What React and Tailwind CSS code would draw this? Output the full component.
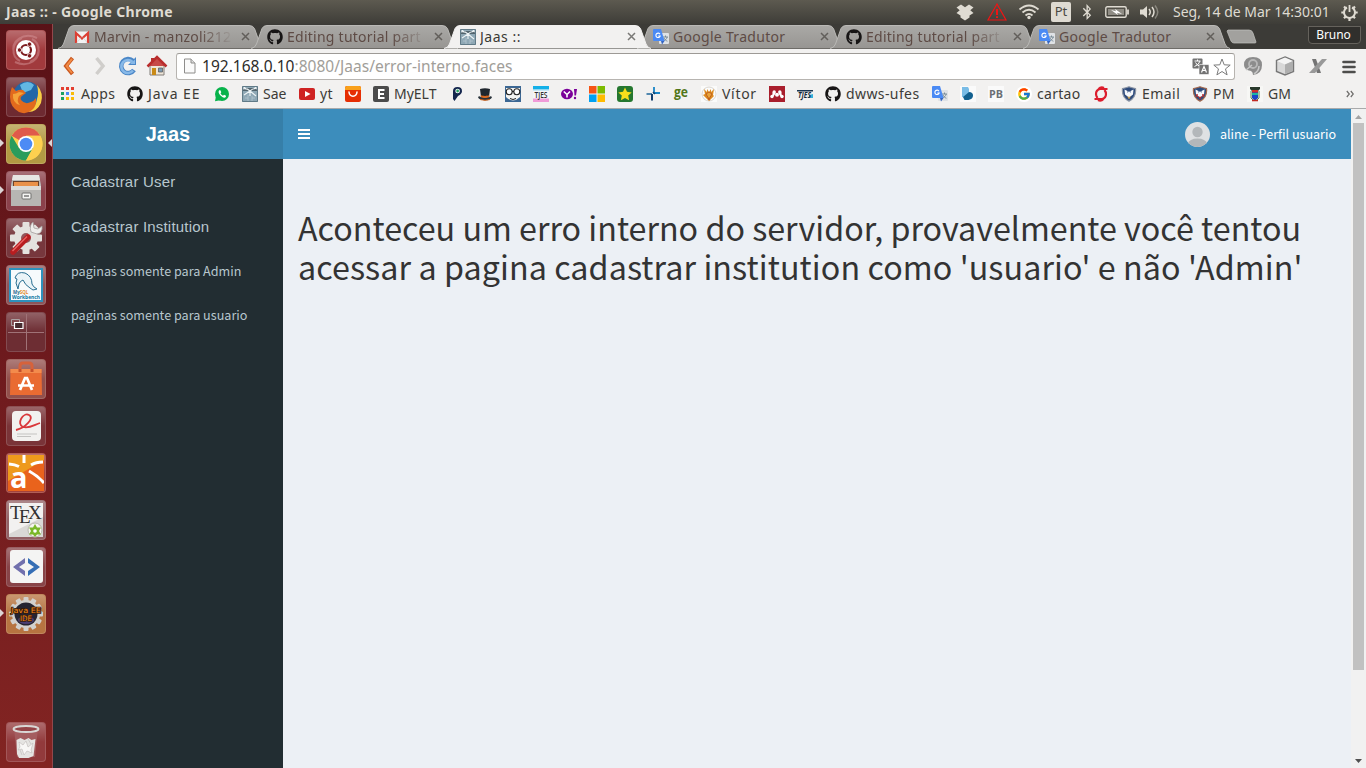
import React from "react";
import { FaGithub, FaBluetoothB } from "react-icons/fa";
import { FcGoogle } from "react-icons/fc";

const ui = "font-['Noto_Sans',sans-serif]";
const source = "font-['Noto_Sans_CJK_JP',sans-serif]";

const Svg = ({ size = 16, box = 16, className = "", children }) => (
  <svg width={size} height={size} viewBox={`0 0 ${box} ${box}`} className={`block shrink-0 ${className}`}>
    {children}
  </svg>
);

/* ---------- small site icons ---------- */
const Github = () => <FaGithub size={16} className="block shrink-0 text-[#171515]" />;

const Gmail = () => (
  <Svg>
    <rect x="1" y="2.500" width="14" height="11.500" fill="#f3f3f3" />
    <path d="M2 14V4l6 5.500L14 4v10" fill="none" stroke="#dc4034" strokeWidth="2.200" />
    <path d="M3 13.500l4-5m6 5l-4-5" stroke="#cfcfcf" strokeWidth=".7" />
  </Svg>
);

const Sae = () => (
  <Svg>
    <rect width="16" height="16" rx="1" fill="#8fa8b5" />
    <rect y="2" width="16" height="3" fill="#52646d" />
    <path d="M0 3c4-1 6 0 8 2 2-2 5-3 8-2M8 5L2 9M8 5l6 5M8 5v5M1 0l3 3m11-3l-3 3" stroke="#eef4f6" strokeWidth="1.100" fill="none" />
    <path d="M6 9v6M10 10v5M3 12h3M10 12h3" stroke="#b9cad2" strokeWidth=".7" fill="none" />
    <path d="M.5.500h15v15H.5z" fill="none" stroke="#617b88" />
  </Svg>
);

const Translate = () => (
  <Svg>
    <rect x="6" y="4" width="10" height="11" rx="1" fill="#dfe2e5" />
    <path d="M10 8h5m-2.500-1.500V8m1.700 0c-.4 2-2 3.300-3.600 4M11 9c.6 1.500 2 2.700 3.400 3.200" stroke="#71838f" strokeWidth=".9" fill="none" />
    <path d="M1 0h7l3.500 12H1a1 1 0 01-1-1V1a1 1 0 011-1z" fill="#4a8af4" />
    <path d="M8 12h3.500L9 15.500z" fill="#3564bf" />
    <path d="M7 5.200A2.200 2.200 0 107.200 7H5.300" stroke="#fff" strokeWidth="1.100" fill="none" />
  </Svg>
);

const Apps = () => (
  <Svg>
    {["#e33e2f", "#e33e2f", "#e33e2f", "#1ba160", "#4a89f3", "#fabb05", "#1ba160", "#fabb05", "#fabb05"].map((c, i) => (
      <rect key={i} x={1 + (i % 3) * 5} y={1 + Math.floor(i / 3) * 5} width="3" height="3" fill={c} />
    ))}
  </Svg>
);

const Whatsapp = () => (
  <Svg>
    <circle cx="8" cy="8" r="7" fill="#08b34b" />
    <path d="M1 15.200l1-5 4 4z" fill="#08b34b" />
    <path d="M5.200 4.200c-1.500 1.700.2 4.300 2 5.900 1.700 1.600 3.500 2.100 4.600.8l.2-1.200-2-1-1 1c-1-.4-2-1.400-2.500-2.500l.8-.9-.9-2z" fill="#fff" />
  </Svg>
);

const Youtube = () => (
  <Svg>
    <rect y="2" width="16" height="12" rx="2" fill="#cf2323" />
    <path d="M6 5l5.500 3L6 11z" fill="#fff" />
  </Svg>
);

const Ali = () => (
  <Svg>
    <rect width="16" height="16" rx="2" fill="#e62e04" />
    <path d="M0 2a2 2 0 012-2h12a2 2 0 012 2v2H0z" fill="#f9a01b" />
    <path d="M4 6c.5 5.500 7.500 5.500 8 0" stroke="#fff" strokeWidth="1.500" fill="none" strokeLinecap="round" />
  </Svg>
);

const Letter = () => (
  <Svg>
    <rect width="16" height="16" rx="2" fill="#4b4b4b" />
    <path d="M11.500 4H6v8h5.500M6 8h5" stroke="#fff" strokeWidth="2" fill="none" />
  </Svg>
);

const Pin = () => (
  <Svg>
    <path d="M4 5Q4 1 8.500 1T13 5.200Q13 8 9 10l-3.500 5L4 13z" fill="#14264d" />
    <circle cx="8.600" cy="5" r="2.300" fill="#fff" />
    <circle cx="8.600" cy="5" r="1.400" fill="#25a163" />
  </Svg>
);

const Hat = () => (
  <Svg>
    <path d="M3 3c3-1 7-1 10 0l-1 8H4z" fill="#20272e" />
    <path d="M3.800 9c2 1.200 6.400 1.200 8.500 0l-.3 3H4z" fill="#d9681f" />
    <path d="M1 11c1-1 2-1 3 .3 2 1 6 1 8 0 1-1.300 2-1.300 3-.3-1 4.500-13 4.500-14 0z" fill="#28323a" />
    <path d="M3 13.500q5 1.600 10 0" stroke="#d9681f" fill="none" />
  </Svg>
);

const Glasses = () => (
  <Svg>
    <rect width="16" height="16" fill="#3c6793" />
    <path d="M1 2h14v9q-7 7-14 0z" fill="#f4f4f2" />
    <path d="M5 12.500q3 2 6 0" fill="none" stroke="#222" />
    <circle cx="4.200" cy="5.800" r="3" fill="#fff" stroke="#222" strokeWidth="1.100" />
    <circle cx="11.800" cy="5.800" r="3" fill="#fff" stroke="#222" strokeWidth="1.100" />
    <path d="M7 5.500h2" stroke="#222" />
  </Svg>
);

const iconText = "font-['Open_Sans',sans-serif] font-bold";

const Tjes = () => (
  <Svg>
    <rect width="16" height="16" fill="#f4f6f8" />
    <rect width="16" height="3.500" fill="#14b0e8" />
    <rect y="3.500" width="16" height="1" fill="#9bdcf3" />
    <rect y="12.500" width="16" height="3.500" fill="#f09bd8" />
    <text x="1.500" y="11.500" fontSize="9" textLength="13" lengthAdjust="spacingAndGlyphs" fill="#333" className="font-['Open_Sans',sans-serif] font-semibold">TJES</text>
  </Svg>
);

const Yahoo = () => (
  <Svg>
    <ellipse cx="6" cy="8" rx="6" ry="5.300" fill="#7b0099" />
    <path d="M2.800 5.500L6 8.500v3M9 5.500L6 8.500" stroke="#fff" strokeWidth="1.600" fill="none" />
    <path d="M13 3h3l-1 6.500h-1.500z" fill="#7b0099" />
    <circle cx="14" cy="12" r="1.200" fill="#7b0099" />
  </Svg>
);

const Windows = () => (
  <Svg>
    <path d="M0 0h7.500v7.500H0z" fill="#f65314" />
    <path d="M8.500 0H16v7.500H8.500z" fill="#7cbb00" />
    <path d="M0 8.500h7.500V16H0z" fill="#00a1f1" />
    <path d="M8.500 8.500H16V16H8.500z" fill="#ffbb00" />
  </Svg>
);

const Star = () => (
  <Svg>
    <rect width="16" height="16" rx="3" fill="#25772f" />
    <path d="M8 1.500l2 4.300 4.700.6-3.500 3.200.9 4.600L8 12l-4.100 2.200.9-4.600L1.300 6.400 6 5.800z" fill="#f6df1b" />
  </Svg>
);

const Spark = () => (
  <Svg>
    <path d="M1.500 8H7" stroke="#2a6f9f" strokeWidth="1.600" fill="none" />
    <path d="M7 8v6.500" stroke="#123e6d" strokeWidth="2" fill="none" />
    <path d="M9 1v6h6" stroke="#1a86c7" strokeWidth="1.800" fill="none" />
    <path d="M8 6l2 2" stroke="#123e6d" strokeWidth="1.500" />
  </Svg>
);

const Ge = () => (
  <Svg>
    <text x="1" y="11" fontSize="13.500" textLength="14" lengthAdjust="spacingAndGlyphs" fill="#517619" className={iconText}>ge</text>
  </Svg>
);

const Crest = () => (
  <Svg>
    <rect width="16" height="16" fill="#fbfbfa" />
    <circle cx="8" cy="8" r="7" fill="none" stroke="#d9d5d0" />
    <path d="M3 3l3 3V3l2 3 2-3v3l3-3-1 6 1 1-5 5-4-4-2-2 2-1z" fill="#dc8a1f" />
    <path d="M5 8l3-2 3 2-3 5zM7 13l2 1" stroke="#b24719" strokeWidth=".7" fill="#e8a43a" />
  </Svg>
);

const Mendeley = () => (
  <Svg>
    <rect width="16" height="16" fill="#a91e2c" />
    <g fill="#fff">
      <circle cx="3" cy="10.500" r="1.700" />
      <circle cx="13" cy="10.500" r="1.700" />
      <circle cx="8" cy="8.800" r="2" />
      <circle cx="5.200" cy="6" r="1.700" />
      <circle cx="10.800" cy="6" r="1.700" />
      <path d="M3.700 6h2.500v2L4.500 10.500H3zM9.800 6h2.500l.7 4.500h-1.500L9.800 8z" />
    </g>
  </Svg>
);

const TjesWide = () => (
  <Svg>
    <path d="M0 4h16v1.500H0z" fill="#1a3550" />
    <path d="M12 9l4-1v4h-4z" fill="#34afd8" />
    <text x="1" y="12" fontSize="9" textLength="13" lengthAdjust="spacingAndGlyphs" fill="#182a38" className={`${iconText} italic`}>TJES</text>
  </Svg>
);

const Bluefold = () => (
  <Svg>
    <rect width="16" height="16" fill="#fafafa" />
    <path d="M2 1h6l1 2v9l-7-1z" fill="#79bce6" />
    <path d="M3 11l6-5q4 0 4 3.500T8.500 14H4.500z" fill="#12608f" />
  </Svg>
);

const Pb = () => (
  <Svg>
    <rect width="16" height="16" fill="#fafafa" />
    <text x="1" y="12" fontSize="11" textLength="14" lengthAdjust="spacingAndGlyphs" fill="#6b6f75" className={iconText}>PB</text>
  </Svg>
);

const Google = () => (
  <span className="flex size-4 shrink-0 items-center justify-center rounded-full bg-white">
    <FcGoogle size={14} />
  </span>
);

const Swirl = () => (
  <Svg>
    <g stroke="#dc1d2d" strokeWidth="2.200" fill="none">
      <path d="M14.500 3H7Q3 4 3 8q0 2 1.500 4" />
      <path d="M1.500 13H9q4-1 4-5 0-2-1.500-4" />
      <path d="M5.500 3Q8 .5 11 2M10.500 13Q8 15.500 5 14" />
    </g>
  </Svg>
);

const Shield = ({ red }) => (
  <Svg>
    <path d="M1.500 2.500Q5 2 8 .8 11 2 14.500 2.500q1 9-6.500 12.700Q.5 11.500 1.500 2.500z" fill="#2e4b7c" stroke={red ? "#a5684c" : "#8d96a5"} strokeWidth="1.200" />
    <path d="M3.500 3.500l.5 5 4 3 4-3 .5-5-3 1.500v2L8 5 6.500 7V5z" fill="#f5f7fb" />
    <path d="M6 10l2 3.500 2-3.500-2 1z" fill={red ? "#bd2d2c" : "#c7a158"} />
    {red && <path d="M5 8v3M11 8v3" stroke="#bd2d2c" strokeWidth="1.500" />}
  </Svg>
);

const Coat = () => (
  <Svg>
    <rect width="16" height="16" fill="#f7f7f5" />
    <path d="M3 1h10v2l-2 2H5L3 3z" fill="#28382b" />
    <path d="M5 4h6v8l-3 3-3-3z" fill="#1947c7" />
    <path d="M5 4h6v2.500H5z" fill="#d12f26" />
    <path d="M5 7h6v2H5z" fill="#19b6a5" />
    <path d="M4 5v7l2 2m6-9v7l-2 2" stroke="#5d8a52" fill="none" />
    <path d="M5 14.500h6" stroke="#c32a22" strokeWidth="1.600" />
  </Svg>
);

/* ---------- top panel ---------- */
const Dropbox = () => (
  <svg width="18" height="17" viewBox="0 0 18 17" className="block">
    <path d="M5 .500L.5 3.500l3.200 2.700L.5 9l4 2.500v2L9 16.500l4.500-3v-2l4-2.500-3.200-2.800 3.200-2.700L13 .500 9 3.200z" fill="#dfdbd2" />
  </svg>
);
const Warning = () => (
  <svg width="20" height="18" viewBox="0 0 20 18" className="block">
    <path d="M10 1L1 17h18z" fill="none" stroke="#f01414" strokeWidth="1.200" />
    <path d="M10 6v6m0 1.200V15" stroke="#f01414" strokeWidth="2" />
  </svg>
);
const Wifi = () => (
  <svg width="22" height="16" viewBox="0 0 22 16" className="block">
    <g fill="none" stroke="#dfdbd2" strokeWidth="1.900">
      <path d="M1.500 5.500Q11-2.500 20.500 5.500M4.500 8.500Q11 3 17.500 8.500M7.500 11.500Q11 8.500 14.500 11.500" />
    </g>
    <circle cx="11" cy="13.500" r="1.700" fill="#dfdbd2" />
  </svg>
);
const Battery = () => (
  <svg width="24" height="12" viewBox="0 0 24 12" className="block">
    <rect x=".8" y=".8" width="20.400" height="10.400" rx="1.500" fill="none" stroke="#dfdbd2" strokeWidth="1.400" />
    <rect x="3" y="3" width="16" height="6" fill="#8f8c84" />
    <path d="M23 3.500v5" stroke="#dfdbd2" strokeWidth="1.800" />
    <path d="M6 4l5 1.200L10 3l7 5-5-1.200L13 9z" fill="#fff" />
  </svg>
);
const Volume = () => (
  <svg width="20" height="14" viewBox="0 0 20 14" className="block">
    <path d="M0 4.500h3L7 1v12L3 9.500H0z" fill="#dfdbd2" />
    <g fill="none" stroke="#dfdbd2" strokeWidth="1.500">
      <path d="M9 4q2.500 3 0 6M12 2q4 5 0 10" />
      <path d="M15 .5q5.500 6.500 0 13" opacity=".4" />
    </g>
  </svg>
);
const Power = () => (
  <svg width="17" height="17" viewBox="0 0 17 17" className="block">
    <g fill="none" stroke="#dfdbd2">
      <path d="M6 3.500a5.500 5.500 0 105 0" strokeWidth="2" />
      <path d="M8.500 1v7" strokeWidth="1.800" />
      <path d="M3 2.500l2 2M14 2.500l-2 2M.3 8.500h2.500M14.200 8.500h2.500M3 14.200l1.600-1.800M14 14.200l-1.600-1.800M8.500 14v3" strokeWidth="2.200" />
    </g>
  </svg>
);

function TopPanel() {
  return (
    <header className={`flex h-6 shrink-0 items-center bg-linear-to-b from-[#5d5a50] to-[#3e3d38] pl-[6px] pr-[8px] text-[#dfdbd2] ${ui}`}>
      <div className="flex-1 text-[14px] leading-6 font-bold tracking-[0.340px]">Jaas :: - Google Chrome</div>
      <div className="flex items-center">
        <div className="mr-[13px]"><Dropbox /></div>
        <div className="mr-[11px]"><Warning /></div>
        <div className="mr-[11px]"><Wifi /></div>
        <div className="mr-[8px] flex h-5 w-5 items-center justify-center rounded-[2px] bg-[#dfdbd2] text-[13px] text-[#4b4943]">Pt</div>
        <FaBluetoothB size={16} className="mr-[10px]" />
        <div className="mr-[11px]"><Battery /></div>
        <div className="mr-[13px]"><Volume /></div>
        <div className="mr-3 w-[156px] text-[14px] leading-6 tracking-[-0.010px] whitespace-nowrap">Seg, 14 de Mar 14:30:01</div>
        <Power />
      </div>
    </header>
  );
}

/* ---------- launcher ---------- */
const Big = (p) => <Svg size={p.size || 36} box={36}>{p.children}</Svg>;

const gearTeeth = (n, r, w, h) =>
  Array.from({ length: n }, (_, i) => (
    <rect key={i} x={18 - w / 2} y={18 - r} width={w} height={h} rx="1" transform={`rotate(${(i * 360) / n} 18 18)`} />
  ));

const launchers = [
  {
    bg: "bg-[#a13a3d]",
    icon: (
      <Big>
        <g fill="none" stroke="#d69497" strokeWidth="2" opacity=".5">
          <path d="M6 22C2 8 16 0 29 6M30 14c4 14-10 22-23 16M12 29C2 24 4 10 14 6M24 7c10 5 8 19-2 23" />
        </g>
        <circle cx="18" cy="18" r="10" fill="#fff" />
        <circle cx="18" cy="18" r="5" fill="none" stroke="#7c1b1e" strokeWidth="2.200" />
        <g fill="#7c1b1e" stroke="#fff" strokeWidth=".8">
          <circle cx="11.500" cy="18" r="2.200" /><circle cx="21.500" cy="12.200" r="2.200" /><circle cx="21.500" cy="23.800" r="2.200" />
        </g>
      </Big>
    ),
  },
  {
    bg: "bg-[#6e2a31]",
    icon: (
      <Big>
        <circle cx="19" cy="16" r="13.500" fill="#2267a8" />
        <path d="M12 6q8-6 14 0l-3 5-8 3z" fill="#62b7e2" />
        <path d="M29 6q7 8 4 18-4 9-13 9 8-5 9-13 2-6 0-14z" fill="#f8cf45" />
        <path d="M4 8l4 4q4-2 7-1l3 3-4 3q-2 1-1 4 4 5 10 2 3-1 5-4 1 8-4 12-6 5-13 2Q2 28 2 18q0-6 2-10z" fill="#e26a1d" />
        <path d="M5 15q3 0 6-2l5 1-5 3q-3 5 1 9-8-2-7-11z" fill="#f5a33a" />
      </Big>
    ),
  },
  {
    bg: "bg-[#b39a43]",
    left: true,
    right: true,
    icon: (
      <Big>
        <circle cx="18" cy="18" r="16.500" fill="#fdd04f" />
        <path d="M18 18L3.700 9.800A16.500 16.500 0 0132.300 9.800H18z" fill="#df5a4b" />
        <path d="M3.700 9.800A16.500 16.500 0 0018 34.500l7-12.400L11 22z" fill="#2a9c5c" />
        <path d="M18 9.800h14.300A16.500 16.500 0 0118 34.500l7-12.500z" fill="#fdd04f" />
        <circle cx="18" cy="18" r="8" fill="#fff" />
        <circle cx="18" cy="18" r="6.300" fill="#4c8bf5" />
      </Big>
    ),
  },
  {
    bg: "bg-[#8b414b]",
    left: true,
    icon: (
      <Big>
        <path d="M5 2h26l2 10v21H3V12z" fill="#b9b8b5" />
        <path d="M5 2h26l1 5H4z" fill="#e7e6e3" />
        <path d="M5 8h26v5H5z" fill="#6b4128" />
        <path d="M6 9h24v4H6z" fill="#e99149" />
        <path d="M3 13h30v20H3z" fill="#b7b6b3" />
        <path d="M3 13h30v4H3z" fill="#dcdbd8" />
        <rect x="14" y="20" width="9" height="6" rx="1" fill="#f5f5f3" stroke="#70706e" />
        <path d="M16 23h5" stroke="#777" strokeWidth="1.500" />
      </Big>
    ),
  },
  {
    bg: "bg-[#77373d]",
    icon: (
      <Big>
        <g fill="#e4e2df">{gearTeeth(8, 16, 7, 9)}<circle cx="18" cy="18" r="12" /></g>
        <circle cx="18" cy="18" r="5" fill="#93565b" />
        <path d="M15 22L27 10" stroke="#dededc" strokeWidth="4" />
        <path d="M25 2l1 6 4 1 4-3q1 7-5 8l-6-2q-2-7 2-10z" fill="#efeeec" stroke="#a4a09e" strokeWidth=".8" />
        <path d="M5 32L20 17" stroke="#b71d20" strokeWidth="5.500" strokeLinecap="round" />
        <path d="M4.500 31L19 16.500" stroke="#ea6462" strokeWidth="1.500" />
      </Big>
    ),
  },
  {
    bg: "bg-[#8d5559]",
    icon: (
      <Big>
        <rect x="2" y="2" width="32" height="32" fill="#f6fafc" stroke="#2d91bd" strokeWidth="2" />
        <path d="M7 11Q9 4 17 6q7 3 7 11 1 3 5 5l-4 1-3-2q-5-3-7-8-3 1-4 4l-1 5-2-6 1-4z" fill="#eaf4f8" stroke="#286e91" strokeWidth="1" />
        <text x="5" y="27" fontSize="4.500" fill="#286e91" className={iconText}>My<tspan fill="#e58c2b">SQL</tspan></text>
        <text x="4" y="32" fontSize="5.500" textLength="28" lengthAdjust="spacingAndGlyphs" fill="#08769f" className={iconText}>Workbench</text>
      </Big>
    ),
  },
  {
    bg: "bg-[#6d2d33]",
    icon: (
      <Big>
        <path d="M18.500 0v36M0 18.500h36" stroke="#a07277" />
        <path d="M3.500 5.500h8v6h-8z" fill="none" stroke="#aaa0a1" />
        <path d="M6.500 8.500h8.500v6H6.500z" fill="#462c30" stroke="#fff" strokeWidth="1.200" />
      </Big>
    ),
  },
  {
    bg: "bg-[#92504c]",
    icon: (
      <Big>
        <path d="M12 11V5q0-3 3-3h6q3 0 3 3v6" stroke="#d6623b" strokeWidth="3" fill="none" />
        <path d="M2.500 8h31l.5 26H2z" fill="#e96b32" />
        <path d="M2.500 8h31v4h-31z" fill="#f38b4c" />
        <path d="M12 11V8m12 3V8" stroke="#c44f2a" strokeWidth="3" />
        <path d="M12 29l5-12h2l5 12M10 24.500h16" stroke="#fff" strokeWidth="2.700" fill="none" />
      </Big>
    ),
  },
  {
    bg: "bg-[#7a3438]",
    icon: (
      <Big>
        <rect x="4" y="3" width="29" height="30" rx="4" fill="#f2f1ef" />
        <path d="M8 22C17 20 27 10 21 7c-6-3-13 9-6 12 6 2 11-2 17-4" stroke="#d9383b" strokeWidth="1.800" fill="none" />
        <path d="M9 26h20M9 28.500h14" stroke="#c4c3c1" strokeWidth="1.200" />
      </Big>
    ),
  },
  {
    bg: "bg-[#a4423a]",
    icon: (
      <Big>
        <rect width="36" height="36" fill="#ee9a1c" />
        <path d="M0 36V26L36 5v31z" fill="#e9631c" />
        <path d="M1 9q6 .5 10 2.500M16 0v8M23 10q5-3 12-3M21 16q9 5 15 12" stroke="#fff" strokeWidth="3" fill="none" />
        <text x="2" y="33" fontSize="29" fill="#fff" className={iconText}>a</text>
      </Big>
    ),
  },
  {
    bg: "bg-[#926064]",
    icon: (
      <Big>
        <rect x="1" y="1" width="34" height="34" fill="#d9d8d6" />
        <path d="M1 1h34v14L1 32z" fill="#f2f1f0" />
        <text x="2" y="17" fontSize="19" fill="#303030" className="font-['Liberation_Serif',serif]">T<tspan x="11" y="21">E</tspan><tspan x="20" y="17">X</tspan></text>
        <circle cx="27" cy="28" r="7" fill="#f5f5ef" stroke="#b8b8ae" />
        <path d="M27 22l2 3.500h4L31 29l2 3.500h-4L27 35l-2-2.500h-4l2-3.500-2-3.500h4z" fill="#7ab829" />
        <circle cx="27" cy="29" r="1.800" fill="#fff" />
      </Big>
    ),
  },
  {
    bg: "bg-[#884448]",
    icon: (
      <Big>
        <rect x="2" y="1" width="33" height="33" rx="3" fill="#f4f4f3" />
        <path d="M17 9v5l-6 4 6 4v5L5 18z" fill="#7170ad" />
        <path d="M20 9v5l6 4-6 4v5l12-9z" fill="#356eb5" />
      </Big>
    ),
  },
  {
    bg: "bg-[#b77441]",
    left: true,
    icon: (
      <Big>
        <g fill="#d2d0cd">{gearTeeth(12, 17, 5, 8)}<circle cx="18" cy="18" r="14" /></g>
        <circle cx="18" cy="18" r="11.500" fill="#252432" />
        <ellipse cx="18" cy="24" rx="8" ry="4" fill="#4a3e73" />
        <g stroke="#351a0b" strokeWidth="1.600" paintOrder="stroke" fill="#f28a1c">
          <text x="3" y="16.500" fontSize="7.500" textLength="30" lengthAdjust="spacingAndGlyphs" className="font-['DejaVu_Sans',sans-serif]">Java EE</text>
          <text x="12" y="25" fontSize="7.500" textLength="12" lengthAdjust="spacingAndGlyphs" className="font-['DejaVu_Sans',sans-serif]">IDE</text>
        </g>
      </Big>
    ),
  },
];

const Trash = () => (
  <Big>
    <path d="M6 4h24l-3 29H9z" fill="#a66264" opacity=".8" />
    <path d="M8.500 16l4-2 4 2 4-2 3 2 4-1-2 17-5 2H11l-2-4z" fill="#e5e4e2" />
    <path d="M11 18l4 3 3-4 2 6 5-4-2 7 1 3-5-2-3 4-2-6-4 1 2-3zM20 15l3 5M12 26l2 5" fill="#f8f7f6" stroke="#bdb9b7" strokeWidth=".6" />
    <ellipse cx="18" cy="5" rx="12.500" ry="3" fill="#944347" stroke="#d9d7d5" strokeWidth="2" />
  </Big>
);

const Tile = ({ bg, icon, left, right }) => (
  <div className="relative flex h-10 w-[52px] shrink-0 items-center justify-center">
    {left && <span className="absolute top-[15px] left-0 h-0 w-0 border-y-[4px] border-l-[4px] border-y-transparent border-l-[#dcd5d5]" />}
    {right && <span className="absolute top-[15px] right-0 h-0 w-0 border-y-[4px] border-r-[4px] border-y-transparent border-r-[#dcd5d5]" />}
    <div className={`flex size-10 items-center justify-center overflow-hidden rounded-[4px] border border-white/15 ${bg}`}>
      <div className="flex size-full items-center justify-center bg-linear-to-b from-white/25 via-transparent to-transparent">{icon}</div>
    </div>
  </div>
);

function Launcher() {
  return (
    <aside className="flex w-[53px] shrink-0 flex-col gap-[7px] border-r border-[#93474b] bg-linear-to-b from-[#591217] via-[#701b1e] to-[#822422] pt-[6px] pb-[6px]">
      {launchers.map((l, i) => <Tile key={i} {...l} />)}
      <div className="mt-auto"><Tile bg="bg-[#923a3c]" icon={<Trash />} /></div>
    </aside>
  );
}

/* ---------- browser ---------- */
const tabs = [
  { icon: <Gmail />, title: "Marvin - manzoli212", fade: true, track: "tracking-[0.200px]" },
  { icon: <Github />, title: "Editing tutorial part", fade: true, track: "tracking-[0.250px]" },
  { icon: <Sae />, title: "Jaas ::", active: true, track: "tracking-[0.500px]" },
  { icon: <Translate />, title: "Google Tradutor", track: "tracking-[0.300px]" },
  { icon: <Github />, title: "Editing tutorial part", fade: true, track: "tracking-[0.250px]" },
  { icon: <Translate />, title: "Google Tradutor", track: "tracking-[0.300px]" },
];

const Tab = ({ icon, title, active, fade, track }) => (
  <div className={`relative h-[25px] w-[193px] shrink-0 ${active ? "z-10" : ""}`}>
    <svg width="212" height="25" viewBox="0 0 212 25" className="absolute top-0 left-0">
      <defs>
        <linearGradient id="tabfill" x1="0" y1="0" x2="0" y2="1">
          <stop offset="0" stopColor="#aaa9a6" />
          <stop offset="1" stopColor="#979592" />
        </linearGradient>
      </defs>
      <path
        d="M0 24.500Q4 24 5.500 20L11 4.500Q12.500 1.500 16 1.500H191Q195 1.500 196.500 4.500L202 20Q203.500 24 207 24.500"
        fill={active ? "#f2f1f0" : "url(#tabfill)"}
        stroke={active ? "#f2f1f0" : "#bab9b6"}
        strokeWidth="1"
      />
      {!active && <path d="M2 24.500h204" stroke="#6e6c68" />}
    </svg>
    <div className="relative flex h-full items-center pl-[16px]">
      {icon}
      <div className={`ml-[4px] w-[140px] overflow-hidden text-[14px] leading-[23px] whitespace-nowrap ${track} ${active ? "text-[#3a3935]" : "text-[#5e4b45]"} ${fade ? "mask-r-from-75% mask-r-to-100%" : ""}`}>
        {title}
      </div>
      <svg width="9" height="9" viewBox="0 0 9 9" className="ml-[7px] block shrink-0">
        <path d="M1 1l7 7M8 1L1 8" stroke={active ? "#7a7976" : "#625f5b"} strokeWidth="1.500" />
      </svg>
    </div>
  </div>
);

function TabStrip() {
  return (
    <div className={`flex h-[25px] shrink-0 justify-between bg-[#3c3b37] pl-[5px] ${ui}`}>
      <div className="flex">
        {tabs.map((t, i) => <Tab key={i} {...t} />)}
        <svg width="32" height="16" viewBox="0 0 32 16" className="mt-[5px] ml-[10px] block">
          <path d="M2 1h21q3 0 4 3l3 9q0 1-1 1H8q-2 0-3-2L1 2z" fill="#a2a19e" stroke="#c2c1be" strokeWidth=".7" />
        </svg>
      </div>
      <div className="mt-[2px] mr-[5px] flex h-[18px] w-[53px] items-center justify-center rounded-b-[4px] border border-[#65625c] bg-[#302f2c] pr-[2px] text-[12px] tracking-[-0.050px] text-white">Bruno</div>
    </div>
  );
}

function Toolbar() {
  return (
    <div className={`flex h-[32px] shrink-0 items-center bg-[#f2f1f0] pt-[4px] pr-[10px] pb-px pl-[9px] ${ui}`}>
      <svg width="14" height="20" viewBox="0 0 14 20" className="mb-px block">
        <path d="M10.500 2L4 10l6.500 8" stroke="#c95820" strokeWidth="4" fill="none" />
        <path d="M10 2.800L4.500 10l5.500 7" stroke="#f38b45" strokeWidth="2" fill="none" />
      </svg>
      <svg width="14" height="20" viewBox="0 0 14 20" className="mb-px ml-[17px] block">
        <path d="M3.500 2L10 10l-6.500 8" stroke="#d0cecb" strokeWidth="3.500" fill="none" />
      </svg>
      <svg width="20" height="20" viewBox="0 0 20 20" className="mb-px ml-[11px] block">
        <path d="M16 14A7 7 0 1115 5" stroke="#4b87c7" strokeWidth="4.500" fill="none" />
        <path d="M18 1v8h-8z" fill="#4b87c7" />
        <path d="M15 14.500A6.500 6.500 0 1114.500 6" stroke="#88b9e8" strokeWidth="2.600" fill="none" />
        <path d="M17 3.500V8h-5z" fill="#88b9e8" />
      </svg>
      <svg width="22" height="21" viewBox="0 0 22 21" className="mb-[2px] ml-[8px] block">
        <path d="M4 10h14v10H4z" fill="#eee5d8" stroke="#817d78" />
        <path d="M5 3h3v5H5z" fill="#b72f2f" />
        <path d="M3 11l8-8 8 8z" fill="#c74a48" />
        <path d="M1.500 11.500L11 2l9.500 9.500" stroke="#b92d2d" strokeWidth="2.500" fill="none" />
        <path d="M6 13h4v7H6z" fill="#c98a17" />
        <path d="M12.500 13h4v4h-4z" fill="#7d9bb4" stroke="#555" strokeWidth=".7" />
      </svg>
      <div className="ml-[8px] flex h-[27px] w-[1059px] shrink-0 items-center rounded-[3px] border border-[#b7b4b0] border-t-[#9d9a96] bg-white pr-[3px] pl-[6px]">
        <svg width="13" height="16" viewBox="0 0 13 16" className="mb-px block">
          <path d="M1.500 1h6.500l4 4v10H1.500z" fill="#fafafa" stroke="#8e8d8b" />
          <path d="M8 1v4h4" fill="#ddd" stroke="#8e8d8b" />
        </svg>
        <div className="ml-[6px] flex-1 text-[15.500px] leading-[23px] tracking-[0.020px] text-[#a19e99]">
          <span className="text-[#2d2c2a]">192.168.0.10</span>:8080/Jaas/error-interno.faces
        </div>
        <svg width="17" height="17" viewBox="0 0 17 17" className="block">
          <rect width="10" height="10" x=".5" y=".5" rx="1" fill="#737373" />
          <path d="M2.500 3h6M5.500 1.500V3M8 3Q7 7 2.500 8.500M3.500 4.500Q5 7.500 8.500 8.500" stroke="#fff" fill="none" />
          <rect x="7" y="6.500" width="10" height="10" rx="1" fill="#737373" stroke="#fff" strokeWidth=".6" />
          <path d="M9.500 14.500l2.500-6 2.500 6M10.500 12.500h3" stroke="#fff" strokeWidth="1.200" fill="none" />
        </svg>
        <svg width="18" height="18" viewBox="0 0 18 18" className="ml-[4px] block">
          <path d="M9 1l2.200 5.800 6 .3-4.700 3.800 1.600 6L9 13.500l-5.100 3.400 1.600-6L.8 7.100l6-.3z" fill="#fff" stroke="#7b7b7b" />
        </svg>
      </div>
      <svg width="18" height="20" viewBox="0 0 18 20" className="mb-px ml-[9px] block">
        <path d="M0 9q0-8 9-8t9 8q0 9-9 10 0-3-2-4-7-1-7-6z" fill="#8c8c8c" />
        <circle cx="9" cy="8" r="4" fill="none" stroke="#b8b8b8" strokeWidth="1.800" />
        <path d="M2 14l6-5M10 18q5-3 5-8" stroke="#c8c8c8" strokeWidth="1.500" fill="none" />
      </svg>
      <svg width="20" height="20" viewBox="0 0 20 20" className="mb-px ml-[13px] block">
        <path d="M10 1l8.500 3.500v11L10 19l-8.500-3.500v-11z" fill="#d8d8d8" stroke="#777" strokeWidth="1.400" />
        <path d="M2 5l8 3.500L18 5l-8-3.500z" fill="#f4f4f4" />
        <path d="M10 8.500V18l8-3V5z" fill="#aeaeae" />
      </svg>
      <svg width="18" height="16" viewBox="0 0 18 16" className="mb-px ml-[14px] block">
        <path d="M3 1h4l5 14H8z" fill="#747474" />
        <path d="M13 1h5L6 15H0z" fill="#999" />
      </svg>
      <svg width="14" height="14" viewBox="0 0 14 14" className="ml-auto block">
        <path d="M1.500 2h11M1.500 7h11M1.500 12h11" stroke="#4d4d4b" strokeWidth="2.600" strokeLinecap="round" />
      </svg>
    </div>
  );
}

const bookmarks = [
  [<Apps />, "Apps", "w-[34px] tracking-[0.400px]"],
  [<Github />, "Java EE", "w-[54px] tracking-[0.950px]"],
  [<Whatsapp />],
  [<Sae />, "Sae", "w-[24px]"],
  [<Youtube />, "yt", "w-[13px] tracking-[0.400px]"],
  [<Ali />],
  [<Letter />, "MyELT", "w-[43px]"],
  [<Pin />],
  [<Hat />],
  [<Glasses />],
  [<Tjes />],
  [<Yahoo />],
  [<Windows />],
  [<Star />],
  [<Spark />],
  [<Ge />],
  [<Crest />, "Vítor", "w-[35px] tracking-[0.700px]"],
  [<Mendeley />],
  [<TjesWide />],
  [<Github />, "dwws-ufes", "w-[74px] tracking-[0.400px]"],
  [<Translate />],
  [<Bluefold />],
  [<Pb />],
  [<Google />, "cartao", "w-[44px] tracking-[0.300px]"],
  [<Swirl />],
  [<Shield />, "Email", "w-[38px] tracking-[0.450px]"],
  [<Shield red />, "PM", "w-[22px] tracking-[0.400px]"],
  [<Coat />, "GM", "w-[24px]"],
];

function Bookmarks() {
  return (
    <div className={`flex h-[28px] shrink-0 items-center border-b border-[#a9aaab] bg-[#f2f1f0] pb-px pl-[7px] text-[14px] leading-5 text-[#3c3b37] ${ui}`}>
      <div className="flex items-center gap-3">
        {bookmarks.map(([icon, label, cls], i) => (
          <div key={i} className="flex h-5 items-center gap-[5px]">
            {icon}
            {label && <span className={`block whitespace-nowrap ${cls}`}>{label}</span>}
          </div>
        ))}
      </div>
      <svg width="8" height="8" viewBox="0 0 8 8" className="mr-[12px] ml-auto block">
        <path d="M.8 1l2.500 3L.8 7M4.800 1l2.500 3-2.500 3" stroke="#6d6c6a" strokeWidth="1.200" fill="none" />
      </svg>
    </div>
  );
}

/* ---------- web page ---------- */
function Page() {
  return (
    <div className="flex min-h-0 flex-1">
      <div className="flex w-[230px] shrink-0 flex-col bg-[#222d32]">
        <div className="flex h-[50px] items-center justify-center bg-[#367fa9] font-['Liberation_Sans',sans-serif] text-[20px] leading-[50px] font-bold text-white">Jaas</div>
        <nav className="flex flex-col pl-[18px] text-[#b8c7ce]">
          <a className="h-[45px] font-['Liberation_Sans',sans-serif] text-[15px] leading-[46px] tracking-[0.190px]">Cadastrar User</a>
          <a className="h-[45px] font-['Liberation_Sans',sans-serif] text-[15px] leading-[46px] tracking-[0.190px]">Cadastrar Institution</a>
          <a className={`h-[44px] text-[12.600px] leading-[44px] ${source}`}>paginas somente para Admin</a>
          <a className={`h-[44px] text-[12.600px] leading-[44px] ${source}`}>paginas somente para usuario</a>
        </nav>
      </div>
      <div className="flex min-w-0 flex-1 flex-col bg-[#ecf0f5]">
        <div className="flex h-[50px] shrink-0 items-center justify-between bg-[#3c8dbc] px-[15px] text-white">
          <svg width="12" height="10" viewBox="0 0 12 10" className="block">
            <path d="M0 1h12M0 5h12M0 9h12" stroke="#fff" strokeWidth="2" />
          </svg>
          <div className="flex items-center gap-[10px]">
            <svg width="25" height="25" viewBox="0 0 25 25" className="block">
              <defs><clipPath id="avatar"><circle cx="12.500" cy="12.500" r="12.500" /></clipPath></defs>
              <g clipPath="url(#avatar)">
                <rect width="25" height="25" fill="#dfe1e3" />
                <circle cx="12.500" cy="10" r="5.200" fill="#b3b7ba" />
                <path d="M2.500 22q2-5.500 10-5.500T22.500 22l-4 3h-12z" fill="#b3b7ba" />
              </g>
            </svg>
            <span className={`text-[12.550px] leading-5 whitespace-nowrap ${source}`}>aline - Perfil usuario</span>
          </div>
        </div>
        <h1 className={`pt-[49px] pl-[15px] text-[32.250px] leading-[39px] whitespace-nowrap text-[#333] ${source}`}>
          Aconteceu um erro interno do servidor, provavelmente você tentou
          <br />
          <span className="tracking-[0.075px]">acessar a pagina cadastrar institution como 'usuario' e não 'Admin'</span>
        </h1>
      </div>
      <div className="flex w-[15px] shrink-0 flex-col items-center justify-between bg-[#f1f1f1]">
        <div className="flex flex-col items-center">
          <svg width="15" height="14" viewBox="0 0 15 14" className="block"><path d="M4 10l3.500-4 3.500 4z" fill="#a3a3a3" /></svg>
          <div className="h-[547px] w-[11px] bg-[#c1c1c1]" />
        </div>
        <svg width="15" height="14" viewBox="0 0 15 14" className="block"><path d="M4 5l3.500 4L11 5z" fill="#505050" /></svg>
      </div>
    </div>
  );
}

export default function App() {
  return (
    <div className="flex h-screen w-[1366px] flex-col overflow-hidden bg-[#3c3b37]">
      <TopPanel />
      <div className="flex min-h-0 flex-1">
        <Launcher />
        <main className="flex min-w-0 flex-1 flex-col">
          <TabStrip />
          <Toolbar />
          <Bookmarks />
          <Page />
        </main>
      </div>
    </div>
  );
}
